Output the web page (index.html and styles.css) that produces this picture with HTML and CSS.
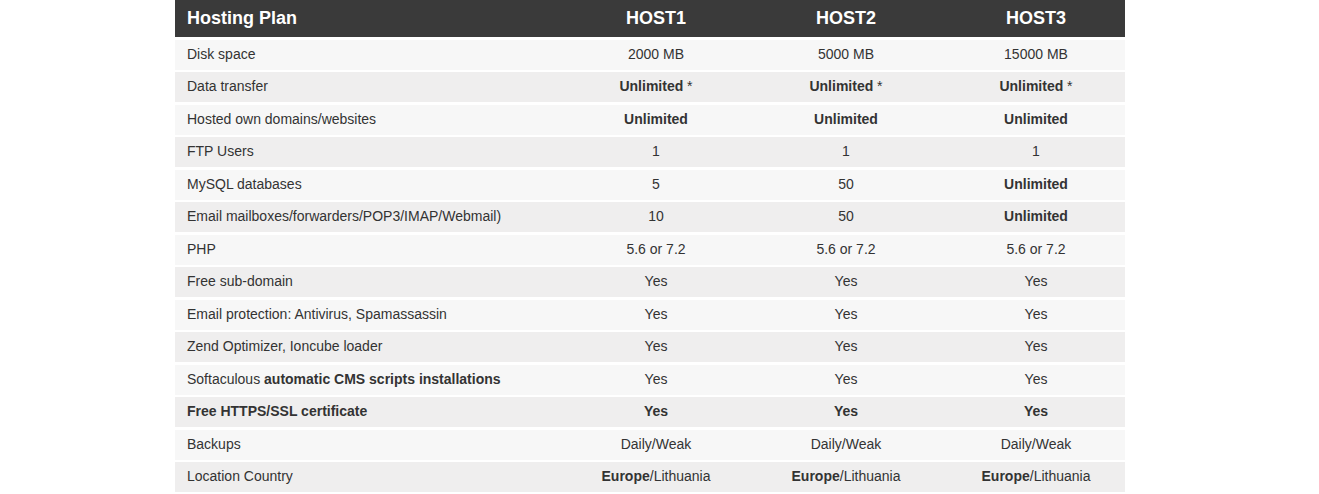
FILE: index.html
```html
<!DOCTYPE html>
<html>
<head>
<meta charset="utf-8">
<link rel="stylesheet" href="styles.css">
</head>
<body>
<div class="page">
  <div class="plans">
    <div class="row head">
      <div class="cell label">Hosting Plan</div>
      <div class="cell">HOST1</div>
      <div class="cell">HOST2</div>
      <div class="cell last">HOST3</div>
    </div>
    <div class="row odd">
      <div class="cell label">Disk space</div>
      <div class="cell">2000 MB</div>
      <div class="cell">5000 MB</div>
      <div class="cell last">15000 MB</div>
    </div>
    <div class="row even">
      <div class="cell label">Data transfer</div>
      <div class="cell"><b>Unlimited</b> *</div>
      <div class="cell"><b>Unlimited</b> *</div>
      <div class="cell last"><b>Unlimited</b> *</div>
    </div>
    <div class="row odd">
      <div class="cell label">Hosted own domains/websites</div>
      <div class="cell"><b>Unlimited</b></div>
      <div class="cell"><b>Unlimited</b></div>
      <div class="cell last"><b>Unlimited</b></div>
    </div>
    <div class="row even">
      <div class="cell label">FTP Users</div>
      <div class="cell">1</div>
      <div class="cell">1</div>
      <div class="cell last">1</div>
    </div>
    <div class="row odd">
      <div class="cell label">MySQL databases</div>
      <div class="cell">5</div>
      <div class="cell">50</div>
      <div class="cell last"><b>Unlimited</b></div>
    </div>
    <div class="row even">
      <div class="cell label">Email mailboxes/forwarders/POP3/IMAP/Webmail)</div>
      <div class="cell">10</div>
      <div class="cell">50</div>
      <div class="cell last"><b>Unlimited</b></div>
    </div>
    <div class="row odd">
      <div class="cell label">PHP</div>
      <div class="cell">5.6 or 7.2</div>
      <div class="cell">5.6 or 7.2</div>
      <div class="cell last">5.6 or 7.2</div>
    </div>
    <div class="row even">
      <div class="cell label">Free sub-domain</div>
      <div class="cell">Yes</div>
      <div class="cell">Yes</div>
      <div class="cell last">Yes</div>
    </div>
    <div class="row odd">
      <div class="cell label">Email protection: Antivirus, Spamassassin</div>
      <div class="cell">Yes</div>
      <div class="cell">Yes</div>
      <div class="cell last">Yes</div>
    </div>
    <div class="row even">
      <div class="cell label">Zend Optimizer, Ioncube loader</div>
      <div class="cell">Yes</div>
      <div class="cell">Yes</div>
      <div class="cell last">Yes</div>
    </div>
    <div class="row odd">
      <div class="cell label">Softaculous <b>automatic CMS scripts installations</b></div>
      <div class="cell">Yes</div>
      <div class="cell">Yes</div>
      <div class="cell last">Yes</div>
    </div>
    <div class="row even">
      <div class="cell label"><b>Free HTTPS/SSL certificate</b></div>
      <div class="cell"><b>Yes</b></div>
      <div class="cell"><b>Yes</b></div>
      <div class="cell last"><b>Yes</b></div>
    </div>
    <div class="row odd">
      <div class="cell label">Backups</div>
      <div class="cell">Daily/Weak</div>
      <div class="cell">Daily/Weak</div>
      <div class="cell last">Daily/Weak</div>
    </div>
    <div class="row even">
      <div class="cell label">Location Country</div>
      <div class="cell"><b>Europe</b>/Lithuania</div>
      <div class="cell"><b>Europe</b>/Lithuania</div>
      <div class="cell last"><b>Europe</b>/Lithuania</div>
    </div>
  </div>
</div>
</body>
</html>
```
FILE: styles.css
```css
html, body {
  margin: 0;
  padding: 0;
  background: #ffffff;
}

.page {
  padding-left: 175px;
  font-family: "Liberation Sans", Arial, sans-serif;
  font-size: 14px;
  color: #333333;
}

.plans {
  width: 950px;
}

.row {
  display: grid;
  grid-template-columns: 386px 190px 190px 184px;
  align-items: center;
  height: 30px;
  margin-top: 2.5px;
  padding-bottom: 2px;
  box-sizing: border-box;
}

.row.head {
  height: 37px;
  margin-top: 0;
  padding-bottom: 1px;
  background: #3a3a3a;
  color: #ffffff;
  font-size: 18px;
  font-weight: bold;
}

.row.odd {
  background: #f7f7f7;
}

.row.even {
  background: #efeeee;
}

.cell {
  text-align: center;
  white-space: nowrap;
}

.cell.label {
  text-align: left;
  padding-left: 12px;
}

.cell.last {
  padding-left: 6px;
}

b {
  font-weight: bold;
}
```
